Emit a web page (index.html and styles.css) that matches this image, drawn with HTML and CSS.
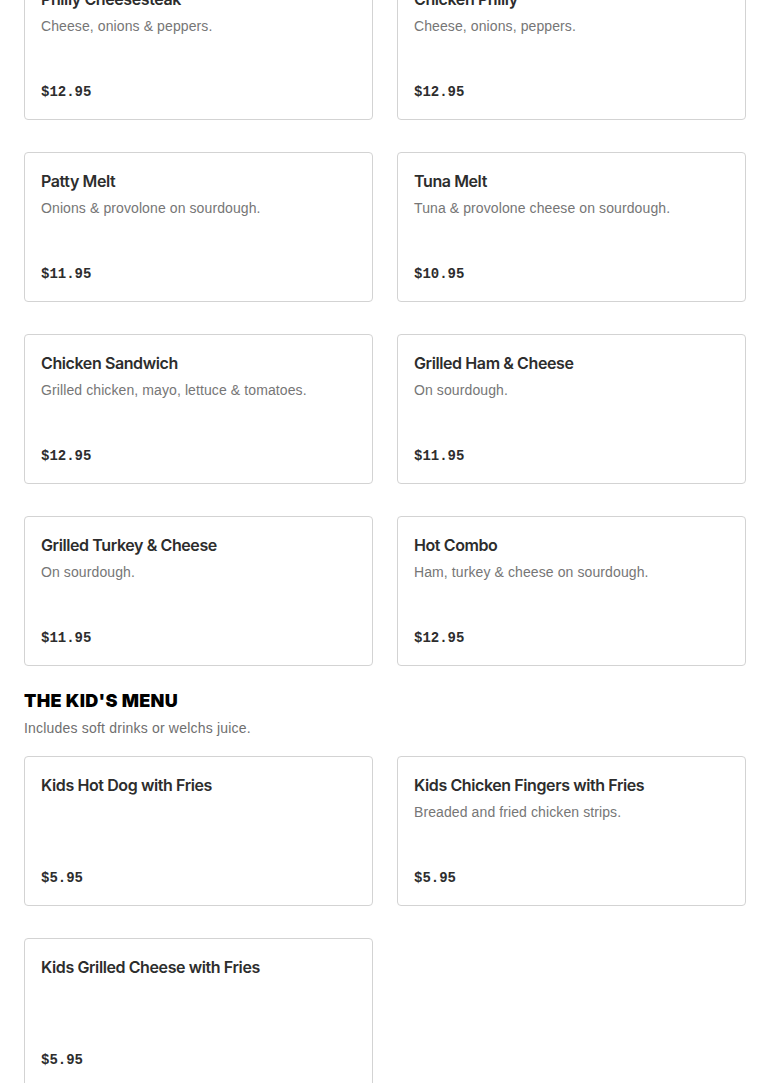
FILE: index.html
```html
<!DOCTYPE html>
<html>
<head>
<meta charset="utf-8">
<link rel="stylesheet" href="styles.css">
</head>
<body>
<main class="menu">
  <section class="grid first">
    <div class="card"><h3 class="title">Philly Cheesesteak</h3><p class="desc">Cheese, onions &amp; peppers.</p><p class="price">$12.95</p></div>
    <div class="card"><h3 class="title">Chicken Philly</h3><p class="desc">Cheese, onions, peppers.</p><p class="price">$12.95</p></div>
    <div class="card"><h3 class="title">Patty Melt</h3><p class="desc">Onions &amp; provolone on sourdough.</p><p class="price">$11.95</p></div>
    <div class="card"><h3 class="title">Tuna Melt</h3><p class="desc">Tuna &amp; provolone cheese on sourdough.</p><p class="price">$10.95</p></div>
    <div class="card"><h3 class="title">Chicken Sandwich</h3><p class="desc">Grilled chicken, mayo, lettuce &amp; tomatoes.</p><p class="price">$12.95</p></div>
    <div class="card"><h3 class="title">Grilled Ham &amp; Cheese</h3><p class="desc">On sourdough.</p><p class="price">$11.95</p></div>
    <div class="card"><h3 class="title">Grilled Turkey &amp; Cheese</h3><p class="desc">On sourdough.</p><p class="price">$11.95</p></div>
    <div class="card"><h3 class="title">Hot Combo</h3><p class="desc">Ham, turkey &amp; cheese on sourdough.</p><p class="price">$12.95</p></div>
  </section>
  <h2 class="section-title">THE KID'S MENU</h2>
  <p class="section-sub">Includes soft drinks or welchs juice.</p>
  <section class="grid">
    <div class="card"><h3 class="title">Kids Hot Dog with Fries</h3><p class="price">$5.95</p></div>
    <div class="card"><h3 class="title">Kids Chicken Fingers with Fries</h3><p class="desc">Breaded and fried chicken strips.</p><p class="price">$5.95</p></div>
    <div class="card"><h3 class="title">Kids Grilled Cheese with Fries</h3><p class="price">$5.95</p></div>
  </section>
</main>
</body>
</html>
```
FILE: styles.css
```css
* { box-sizing: border-box; }
html, body { margin: 0; padding: 0; background: #fff; }
body { font-family: "Inter", "Liberation Sans", sans-serif; color: #2d2d2d; }
.menu { padding: 0 24px 40px; margin-top: -30px; }
.grid { display: grid; grid-template-columns: 1fr 1fr; column-gap: 24px; row-gap: 32px; }
.card {
  height: 150px;
  border: 1px solid #d3d3d3;
  border-radius: 4px;
  padding: 16px 16px 15px;
  display: flex;
  flex-direction: column;
  background: #fff;
}
.title { margin: 0; font-size: 16px; line-height: 24px; font-weight: 600; color: #2d2d2d; letter-spacing: -0.4px; }
.desc { margin: 4px 0 0; font-size: 14px; line-height: 22px; color: #767676; font-family: "Liberation Sans", sans-serif; letter-spacing: 0.1px; }
.price { margin: auto 0 0; font-family: "Liberation Mono", "DejaVu Sans Mono", monospace; font-weight: 700; font-size: 14px; line-height: 24px; color: #2d2d2d; }
.section-title { margin: 23px 0 0; font-family: "Inter", "Liberation Sans", sans-serif; font-weight: 900; font-size: 18px; line-height: 24px; color: #000; letter-spacing: 0.3px; }
.section-sub { margin: 5px 0 0; font-family: "Liberation Sans", sans-serif; font-size: 14px; line-height: 20px; color: #6f6f6f; letter-spacing: 0.2px; }
.section-sub + .grid { margin-top: 18px; }
```
